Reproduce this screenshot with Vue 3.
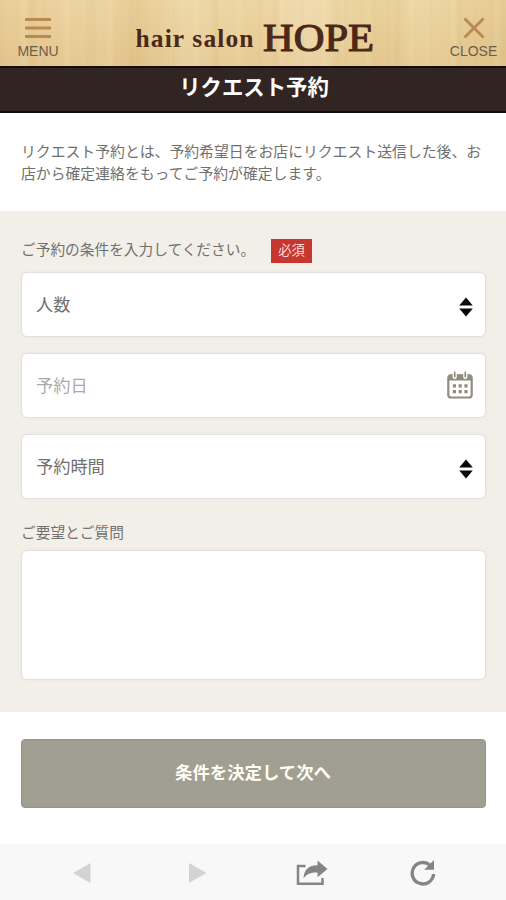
<script setup>
import { ref } from 'vue'

const guests = ref('人数')
const time = ref('予約時間')
const request = ref('')
</script>

<template>
  <div class="screen">
    <header class="header">
      <button class="nav menu" type="button">
        <svg width="28" height="22" viewBox="0 0 28 22"><path d="M1 2.5h26M1 11h26M1 19.5h26" stroke="#b78b52" stroke-width="2.8" /></svg>
        <span>MENU</span>
      </button>
      <svg class="logo" width="260" height="54" viewBox="0 0 260 54">
        <text class="small" x="9.5" y="38.5" textLength="118" lengthAdjust="spacing">hair salon</text>
        <text class="large" x="137" y="42.5" textLength="111" lengthAdjust="spacingAndGlyphs">HOPE</text>
      </svg>
      <button class="nav close" type="button">
        <svg width="22" height="22" viewBox="0 0 22 22"><path d="M1.5 1.5l19 19M20.5 1.5l-19 19" stroke="#b78b52" stroke-width="3" /></svg>
        <span>CLOSE</span>
      </button>
    </header>
    <h1 class="title">リクエスト予約</h1>
    <p class="intro">リクエスト予約とは、予約希望日をお店にリクエスト送信した後、お店から確定連絡をもってご予約が確定します。</p>

    <main class="form">
      <div class="label"><span class="label-text">ご予約の条件を入力してください。</span><span class="required">必須</span></div>
      <div class="field">
        <span>{{ guests }}</span>
        <svg class="sort" width="14" height="20" viewBox="0 0 14 20"><path d="M7 .6L13.8 8.6H.2zM7 19.4L13.8 11.4H.2z" fill="#080808" /></svg>
      </div>
      <div class="field">
        <span class="placeholder">予約日</span>
        <svg class="calendar" width="26" height="28" viewBox="0 0 26 28">
          <rect x="1.3" y="4.3" width="23.4" height="22.2" rx="2.8" fill="#fff" stroke="#918d7e" stroke-width="2.2" />
          <path d="M1 9.5V6Q1 3.5 4 3.5h18q3 0 3 2.5v3.5z" fill="#918d7e" />
          <path d="M7.7 2v4M18.3 2v4" stroke="#fff" stroke-width="4.2" stroke-linecap="round" />
          <path d="M7.7 1.5v4M18.3 1.5v4" stroke="#918d7e" stroke-width="1.8" stroke-linecap="round" />
          <path d="M5.8 14.8h15M5.8 20.6h15" stroke="#918d7e" stroke-width="3.2" stroke-dasharray="3.2 2.6" />
        </svg>
      </div>
      <div class="field">
        <span>{{ time }}</span>
        <svg class="sort" width="14" height="20" viewBox="0 0 14 20"><path d="M7 .6L13.8 8.6H.2zM7 19.4L13.8 11.4H.2z" fill="#080808" /></svg>
      </div>
      <div class="label second">ご要望とご質問</div>
      <textarea v-model="request" class="area"></textarea>
    </main>

    <div class="action"><button class="submit" type="button">条件を決定して次へ</button></div>

    <footer class="toolbar">
      <svg width="18" height="20" viewBox="0 0 18 20"><path d="M0 10L17.5 0v20z" fill="#d3d3d3" /></svg>
      <svg width="18" height="20" viewBox="0 0 18 20"><path d="M17.5 10L0 0v20z" fill="#d3d3d3" /></svg>
      <svg width="32" height="26" viewBox="0 0 32 26">
        <path d="M9.5 6H2v17.7h24.5V18" fill="none" stroke="#858585" stroke-width="2.5" />
        <path d="M7.5 18.5C8 9.5 13 5.3 21.5 5.3V.5L31.5 9l-10 8.3v-4.8C15 12.4 11 13.5 7.5 18.5z" fill="#858585" />
      </svg>
      <svg width="26" height="28" viewBox="0 0 26 28">
        <path d="M20 6.2A10.7 10.7 0 1 0 23.6 15" fill="none" stroke="#858585" stroke-width="3.4" />
        <path d="M24 1v9.8h-9.8z" fill="#858585" />
      </svg>
    </footer>
  </div>
</template>

<style>
body {
  margin: 0;
  background: #fff;
}
</style>

<style scoped>
* {
  box-sizing: border-box;
}
.screen {
  width: 506px;
  height: 900px;
  display: flex;
  flex-direction: column;
  overflow: hidden;
  background: #fff;
  color: #70706e;
  font-family: "Noto Sans CJK JP", sans-serif;
}
button {
  border: 0;
  padding: 0;
}
.header {
  flex: none;
  height: 66px;
  display: flex;
  justify-content: space-between;
  background:
    linear-gradient(180deg, rgba(255, 240, 200, 0.12), rgba(190, 145, 70, 0.1)),
    repeating-linear-gradient(90deg, rgba(170, 120, 50, 0.03) 0 2px, transparent 5px 19px, rgba(255, 245, 210, 0.12) 23px 25px, transparent 29px 43px),
    repeating-linear-gradient(90deg, transparent 0 27px, rgba(160, 110, 40, 0.05) 31px 33px, transparent 37px 61px),
    linear-gradient(90deg, #e7ca94 0%, #ead09d 20%, #e4c78f 27%, #ecd5a5 36%, #ead09b 50%, #efd9ad 61%, #e7cc94 74%, #ebd3a0 84%, #e2c58b 100%);
}
.nav {
  width: 76px;
  display: flex;
  flex-direction: column;
  align-items: center;
  background: none;
  color: #6b5d4c;
  font: 14px/16px "Liberation Sans", sans-serif;
}
.menu {
  padding-top: 17px;
  gap: 4px;
}
.close {
  width: 65px;
  padding-top: 17px;
  gap: 4px;
}
.logo {
  margin-top: 8px;
  margin-right: 5px;
}
.logo text {
  font-family: "Liberation Serif", serif;
  fill: #4b2918;
}
.logo .small {
  font-size: 25.5px;
  font-weight: bold;
}
.logo .large {
  font-size: 40.5px;
  stroke: #4b2918;
  stroke-width: 1.2px;
}
.title {
  flex: none;
  height: 47px;
  margin: 0;
  border-top: 2px solid #130c0a;
  border-bottom: 2px solid #130c0a;
  background: #302522;
  color: #fff;
  text-align: center;
  font-size: 21.4px;
  line-height: 35px;
  font-weight: 700;
  padding-left: 2px;
}
.intro {
  flex: none;
  height: 98px;
  margin: 0;
  padding: 27px 20px 0 21px;
  font-size: 14.85px;
  line-height: 21.5px;
}
.form {
  flex: none;
  height: 501px;
  padding: 26px 20px 0 21px;
  background: #f2efe9;
}
.label {
  height: 26px;
  display: flex;
  align-items: center;
  margin-bottom: 9px;
  font-size: 14.7px;
  line-height: 24px;
}
.label-text {
  padding-bottom: 3px;
}
.required {
  width: 41px;
  height: 24px;
  margin: 2px 0 0 16px;
  background: #c8372f;
  color: #fbdcd6;
  font-size: 13.3px;
  line-height: 22px;
  text-align: center;
}
.field {
  height: 65px;
  display: flex;
  align-items: center;
  justify-content: space-between;
  margin-bottom: 16px;
  padding: 0 13px 2px 14px;
  border: 1px solid #e3e1dd;
  border-radius: 6px;
  background: #fff;
  font-size: 17.2px;
  box-shadow: 0 0 2px rgba(60, 60, 60, 0.08);
}
.placeholder {
  color: #aaa;
}
.sort {
  margin: 6px -1px 0 0;
}
.calendar {
  margin-right: -1px;
}
.second {
  margin: 20px 0 5px;
}
.area {
  display: block;
  width: 465px;
  height: 130px;
  padding: 12px;
  border: 1px solid #e3e1dd;
  border-radius: 6px;
  outline: 0;
  resize: none;
  background: #fff;
  box-shadow: 0 0 2px rgba(60, 60, 60, 0.08);
}
.action {
  flex: none;
  height: 132px;
  padding: 27px 20px 0 21px;
}
.submit {
  width: 100%;
  height: 69px;
  border: 1px solid #96938a;
  border-radius: 4px;
  padding: 0 1px 3px 0;
  background: #a19e92;
  color: #fffdf4;
  font: 700 17.4px/24px "Noto Sans CJK JP", sans-serif;
}
.toolbar {
  flex: none;
  height: 56px;
  display: grid;
  grid-template-columns: 116px 116px 111px 111px;
  justify-items: center;
  align-items: center;
  padding: 2px 0 0 24px;
  background: #f8f8f8;
}
</style>
